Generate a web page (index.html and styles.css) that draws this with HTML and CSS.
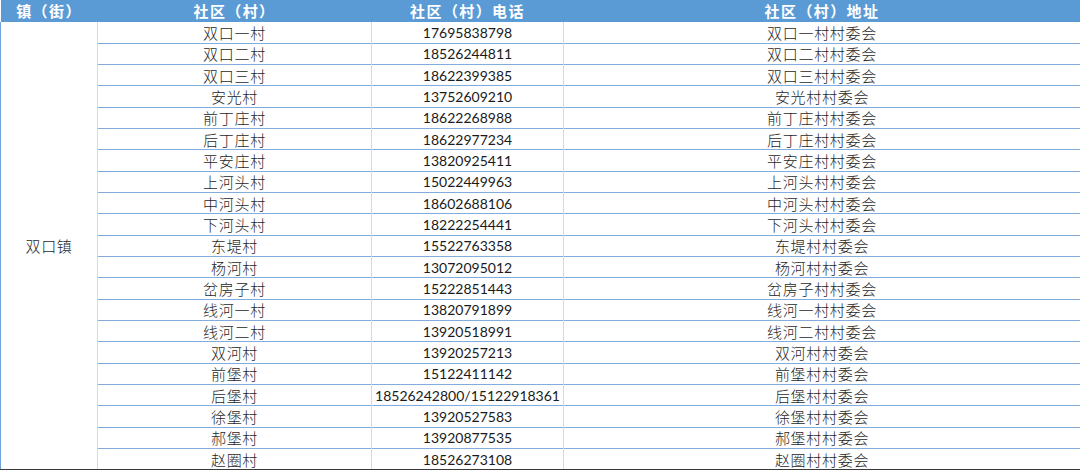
FILE: index.html
```html
<!DOCTYPE html>
<html lang="zh-CN">
<head>
<meta charset="utf-8">
<title>双口镇社区（村）联系方式</title>
<link rel="stylesheet" href="styles.css">
</head>
<body>
<table class="sheet">
  <colgroup>
    <col class="c-town"><col class="c-name"><col class="c-tel"><col class="c-addr">
  </colgroup>
  <thead>
    <tr class="head"><th>镇（街）</th><th>社区（村）</th><th>社区（村）电话</th><th>社区（村）地址</th></tr>
  </thead>
  <tbody>
    <tr><td class="town" rowspan="21">双口镇</td><td>双口一村</td><td class="num">17695838798</td><td>双口一村村委会</td></tr>
    <tr><td>双口二村</td><td class="num">18526244811</td><td>双口二村村委会</td></tr>
    <tr><td>双口三村</td><td class="num">18622399385</td><td>双口三村村委会</td></tr>
    <tr><td>安光村</td><td class="num">13752609210</td><td>安光村村委会</td></tr>
    <tr><td>前丁庄村</td><td class="num">18622268988</td><td>前丁庄村村委会</td></tr>
    <tr><td>后丁庄村</td><td class="num">18622977234</td><td>后丁庄村村委会</td></tr>
    <tr><td>平安庄村</td><td class="num">13820925411</td><td>平安庄村村委会</td></tr>
    <tr><td>上河头村</td><td class="num">15022449963</td><td>上河头村村委会</td></tr>
    <tr><td>中河头村</td><td class="num">18602688106</td><td>中河头村村委会</td></tr>
    <tr><td>下河头村</td><td class="num">18222254441</td><td>下河头村村委会</td></tr>
    <tr><td>东堤村</td><td class="num">15522763358</td><td>东堤村村委会</td></tr>
    <tr><td>杨河村</td><td class="num">13072095012</td><td>杨河村村委会</td></tr>
    <tr><td>岔房子村</td><td class="num">15222851443</td><td>岔房子村村委会</td></tr>
    <tr><td>线河一村</td><td class="num">13820791899</td><td>线河一村村委会</td></tr>
    <tr><td>线河二村</td><td class="num">13920518991</td><td>线河二村村委会</td></tr>
    <tr><td>双河村</td><td class="num">13920257213</td><td>双河村村委会</td></tr>
    <tr><td>前堡村</td><td class="num">15122411142</td><td>前堡村村委会</td></tr>
    <tr><td>后堡村</td><td class="num">18526242800/15122918361</td><td>后堡村村委会</td></tr>
    <tr><td>徐堡村</td><td class="num">13920527583</td><td>徐堡村村委会</td></tr>
    <tr><td>郝堡村</td><td class="num">13920877535</td><td>郝堡村村委会</td></tr>
    <tr><td>赵圈村</td><td class="num">18526273108</td><td>赵圈村村委会</td></tr>
  </tbody>
</table>
</body>
</html>
```
FILE: styles.css
```css
html, body {
  margin: 0;
  padding: 0;
  background: #ffffff;
}

.sheet {
  width: 1080px;
  border-collapse: collapse;
  table-layout: fixed;
  font-family: "Noto Sans CJK SC", "Noto Sans", sans-serif;
  font-size: 15px;
  font-weight: 300;
  letter-spacing: 0.7px;
  color: #1f1f1f;
}

.c-town { width: 97px; }
.c-name { width: 274px; }
.c-tel { width: 192px; }
.c-addr { width: 517px; }

.head {
  height: 22px;
  background: #5b9bd5;
}

.head th {
  padding: 0;
  color: #ffffff;
  font-weight: bold;
  font-size: 15px;
  letter-spacing: 1.4px;
  line-height: 20px;
  text-align: center;
  border: none;
}

tbody tr {
  height: 21.33px;
}

tbody td {
  padding: 0;
  text-align: center;
  line-height: 19px;
  border-top: 1px solid #82acdc;
  border-left: 1px solid #cbdaee;
  white-space: nowrap;
}

tbody tr:first-child td {
  border-top: none;
}

tbody tr:last-child td {
  border-bottom: 1px solid #3a3a3a;
}

tbody td.town {
  border-left: 1px solid #6fa3da;
  border-bottom: 1px solid #3a3a3a;
  vertical-align: middle;
}

tbody td:last-child {
  border-right: 1px solid #82acdc;
}

.num {
  font-family: "Lato", "Noto Sans", sans-serif;
  font-size: 14px;
  font-weight: normal;
  letter-spacing: 0;
  color: #1a1a1a;
}
```
